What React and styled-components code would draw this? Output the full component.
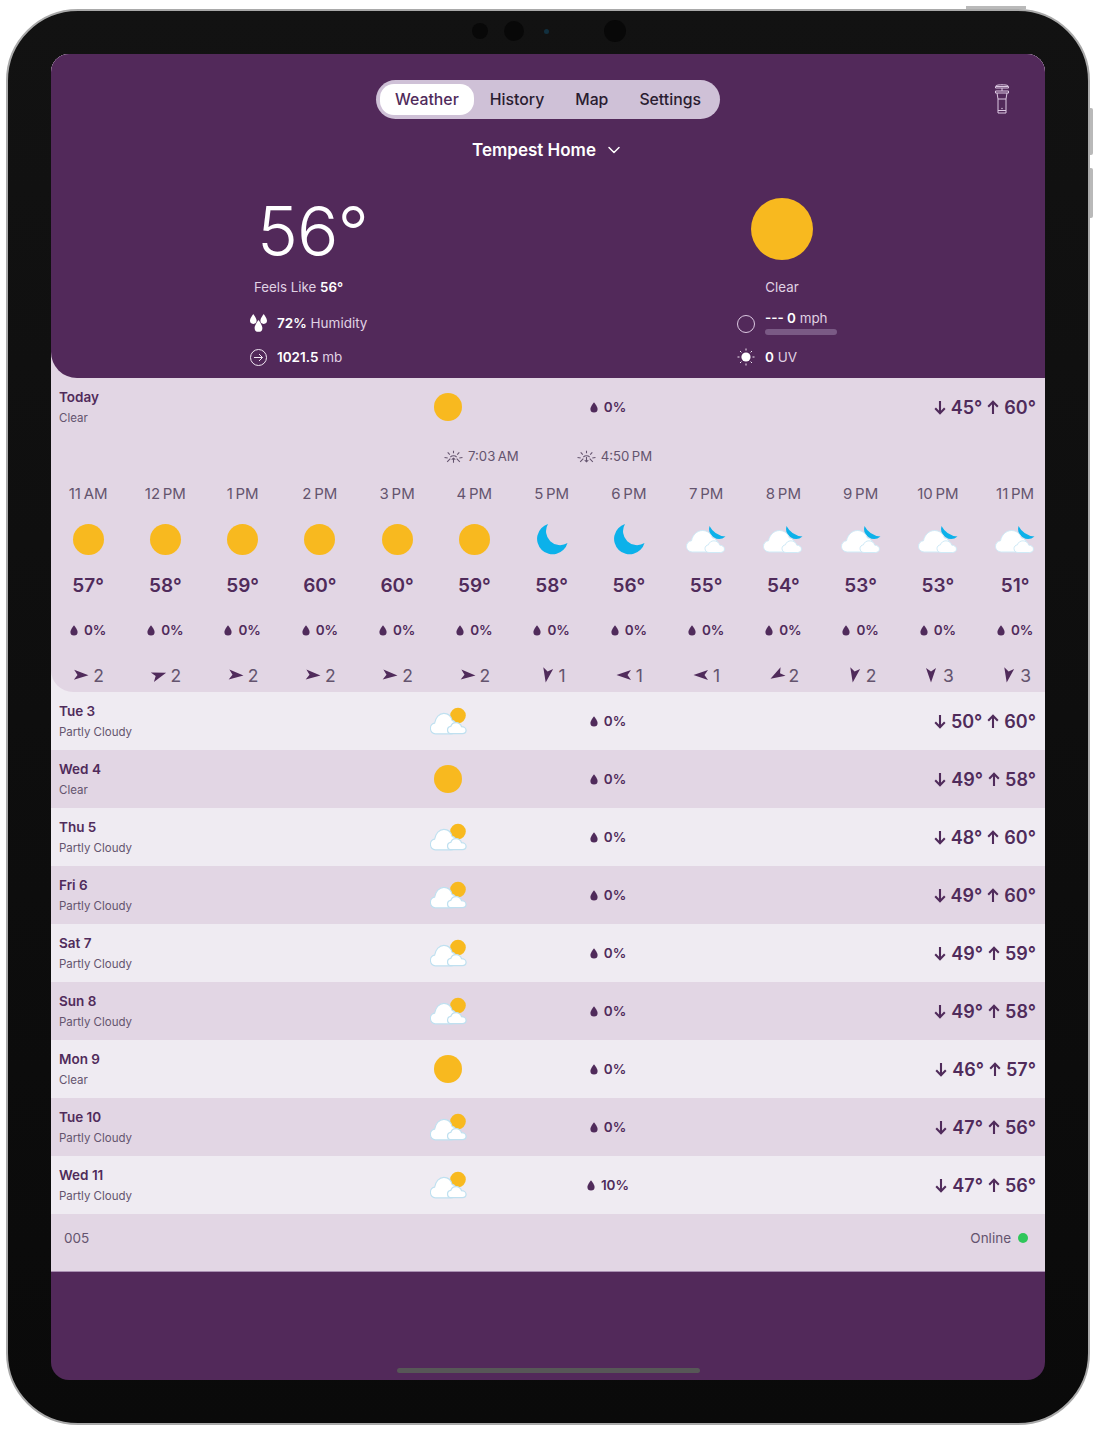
import React from 'react';
import styled, { createGlobalStyle } from 'styled-components';
import { ChevronDown } from 'lucide-react';

const PURPLE = '#52295a';
const LAVENDER = '#e2d6e4';
const PALE = '#efebf2';
const INK = '#502b5b';
const MUTED = '#64546e';

const GlobalStyle = createGlobalStyle`
  html, body {
    margin: 0;
    background: #ffffff;
    font-family: 'Inter', 'Liberation Sans', sans-serif;
  }
`;

const Page = styled.div`
  width: 1097px;
  height: 1429px;
  padding: 9px 0 0 6px;
  box-sizing: border-box;
  overflow: hidden;
`;

const Device = styled.div`
  position: relative;
  width: 1084px;
  height: 1416px;
  box-sizing: border-box;
  padding: 43px;
  background: linear-gradient(#121212, #0a0a0a);
  border: 2px solid #a9a9a9;
  border-radius: 72px;
`;

const SideButton = styled.div`
  position: absolute;
  right: -5px;
  top: ${p => p.$top}px;
  width: 3px;
  height: ${p => p.$height}px;
  background: #b9b9b9;
  border-radius: 0 2px 2px 0;
`;

const TopButton = styled.div`
  position: absolute;
  top: -5px;
  right: 62px;
  width: 60px;
  height: 3px;
  background: #b9b9b9;
`;

const Sensors = styled.div`
  position: absolute;
  top: 9px;
  left: 464px;
  height: 22px;
  display: flex;
  align-items: center;
`;

const Lens = styled.span`
  width: ${p => p.$size}px;
  height: ${p => p.$size}px;
  margin-left: ${p => p.$gap}px;
  border-radius: 50%;
  background: ${p => p.$color || '#080808'};
`;

const Screen = styled.div`
  width: 994px;
  height: 1326px;
  display: flex;
  flex-direction: column;
  background: ${PURPLE};
  border-radius: 18px;
  overflow: hidden;
`;

const Board = styled.div`
  background: ${PALE};
  border-bottom: 1px solid #a98fb2;
`;

const TopBlock = styled.div`
  background: ${LAVENDER};
  border-bottom-left-radius: 22px;
  overflow: hidden;
`;

const Header = styled.header`
  position: relative;
  height: 324px;
  box-sizing: border-box;
  padding-top: 26px;
  display: flex;
  flex-direction: column;
  background: ${PURPLE};
  border-bottom-left-radius: 26px;
`;

const Tabs = styled.nav`
  align-self: center;
  display: flex;
  height: 39px;
  box-sizing: border-box;
  padding: 4px;
  background: #cfc1d7;
  border-radius: 20px;
`;

const Tab = styled.div`
  padding: 0 15.5px 1px;
  display: flex;
  align-items: center;
  font-size: 15.8px;
  font-weight: 500;
  color: ${p => (p.$active ? INK : '#2a1c30')};
  background: ${p => (p.$active ? '#ffffff' : 'transparent')};
  border-radius: 14px;
`;

const Station = styled.svg`
  position: absolute;
  top: 30px;
  right: 35px;
`;

const Location = styled.div`
  align-self: center;
  margin-top: 19px;
  height: 24px;
  display: flex;
  align-items: center;
  gap: 8px;
  color: #ffffff;
  font-size: 17px;
  font-weight: 600;
`;

const Hero = styled.div`
  margin-top: 36px;
  padding-left: 199px;
  display: flex;
`;

const LeftColumn = styled.div`
  width: 487px;
  display: flex;
  flex-direction: column;
  align-items: flex-start;
`;

const RightColumn = styled.div`
  width: 90px;
  display: flex;
  flex-direction: column;
`;

const Temperature = styled.div`
  height: 66px;
  margin-left: 7px;
  font-size: 69px;
  line-height: 66px;
  font-weight: 300;
  letter-spacing: -1px;
  color: #ffffff;
`;

const Caption = styled.div`
  margin-top: ${p => p.$top || 13}px;
  margin-left: ${p => p.$left || 0}px;
  height: 20px;
  line-height: 20px;
  font-size: 13.3px;
  color: #e0d2e4;
  white-space: nowrap;
  text-align: ${p => p.$align || 'left'};

  b {
    font-weight: 600;
    color: #ffffff;
  }
`;

const StatRow = styled.div`
  margin-top: ${p => p.$top}px;
  height: 20px;
  display: flex;
  align-items: center;
  gap: 10px;
  font-size: 13.5px;
  color: #e0d2e4;
  white-space: nowrap;

  svg {
    flex-shrink: 0;
  }

  b {
    font-weight: 600;
    color: #ffffff;
  }
`;

const BigSun = styled.div`
  width: 62px;
  height: 62px;
  margin-left: 14px;
  border-radius: 50%;
  background: #f8b91f;
`;

const WindBlock = styled.div`
  margin-top: 12px;
  display: flex;
  gap: 10px;
`;

const WindDial = styled.div`
  flex-shrink: 0;
  width: 18px;
  height: 18px;
  margin-top: 6px;
  box-sizing: border-box;
  border: 1px solid #dcc9e2;
  border-radius: 50%;
`;

const WindText = styled.div`
  height: 18px;
  line-height: 18px;
  font-size: 13.4px;
  color: #e0d2e4;
  white-space: nowrap;

  b {
    font-weight: 600;
    color: #ffffff;
  }
`;

const WindBar = styled.div`
  width: 72px;
  height: 6px;
  margin-top: 2px;
  background: #7a5a85;
  border-radius: 3px;
`;

const DayRow = styled.div`
  height: 58px;
  box-sizing: border-box;
  padding: 0 9px 0 8px;
  display: grid;
  grid-template-columns: 355px 68px 252px 1fr;
  align-items: center;
  background: ${p => (p.$pale ? PALE : LAVENDER)};
`;

const DayName = styled.div`
  height: 18px;
  line-height: 18px;
  font-size: 13.5px;
  font-weight: 600;
  color: ${INK};
`;

const DaySummary = styled.div`
  margin-top: 4px;
  height: 16px;
  line-height: 16px;
  font-size: 11.5px;
  color: ${MUTED};
`;

const IconCell = styled.div`
  display: flex;
  justify-content: center;
`;

const Disc = styled.div`
  width: ${p => p.$size}px;
  height: ${p => p.$size}px;
  border-radius: 50%;
  background: #f8b91f;
`;

const Precip = styled.div`
  display: flex;
  justify-content: center;
  align-items: center;
  gap: 6px;
  font-size: 13.5px;
  font-weight: 600;
  color: ${INK};
`;

const HighLow = styled.div`
  display: flex;
  justify-content: flex-end;
  align-items: center;
  gap: 5px;
  font-size: 18px;
  font-weight: 600;
  color: ${INK};
`;

const SunTimes = styled.div`
  height: 40px;
  padding-left: 393px;
  display: flex;
  align-items: center;
  gap: 58px;
`;

const SunTime = styled.div`
  display: flex;
  align-items: center;
  gap: 5px;
  font-size: 13.2px;
  color: ${MUTED};
`;

const HourStrip = styled.div`
  display: flex;
  margin-left: -1.5px;
  padding-top: 8px;
  padding-bottom: 6px;
`;

const Hour = styled.div`
  flex: 0 0 77.25px;
  display: flex;
  flex-direction: column;
  align-items: center;
`;

const HourLabel = styled.div`
  height: 20px;
  line-height: 20px;
  font-size: 15px;
  color: ${MUTED};
  white-space: nowrap;
`;

const HourIcon = styled.div`
  margin-top: 15px;
  height: 40px;
  display: flex;
  align-items: center;
  justify-content: center;
`;

const HourTemp = styled.div`
  margin-top: 15px;
  height: 24px;
  line-height: 24px;
  font-size: 19px;
  font-weight: 600;
  color: ${INK};
`;

const HourPrecip = styled(Precip)`
  margin-top: 22px;
  height: 20px;
`;

const HourWind = styled.div`
  margin-top: 24px;
  height: 22px;
  display: flex;
  align-items: center;
  gap: 3px;
  font-size: 17.5px;
  color: ${MUTED};
`;

const StatusRow = styled.div`
  height: 57px;
  box-sizing: border-box;
  padding: 0 17px 10px 13px;
  display: flex;
  align-items: center;
  justify-content: space-between;
  background: ${LAVENDER};
  font-size: 13.5px;
  color: ${MUTED};
`;

const Online = styled.div`
  display: flex;
  align-items: center;
  gap: 7px;
`;

const OnlineDot = styled.span`
  width: 10px;
  height: 10px;
  border-radius: 50%;
  background: #2fc65a;
`;

const Foot = styled.div`
  flex: 1;
  display: flex;
  align-items: flex-end;
  justify-content: center;
  padding-bottom: 7px;
`;

const HomeBar = styled.div`
  width: 303px;
  height: 5px;
  background: #575757;
  border-radius: 3px;
`;

const CLOUD_BIG = 'M6.5 27C2.9 27 .5 24.4 .5 21.3c0-3 2.2-5.3 5-5.6C6.6 10 11 5.500 16.500 5.500c4.700 0 8.600 3 9.800 7.300 3.400.4 5.700 3.600 5.700 7 0 3.800-3 7.200-7 7.200z';
const CLOUD_SMALL = 'M23 27.500c-2.300 0-4-1.700-4-3.900 0-2 1.500-3.600 3.400-3.800.7-2.400 3-4 5.500-4 2.800 0 5.100 1.800 5.800 4.300 2.500.1 4.800 1.700 4.800 3.900 0 2.200-1.800 3.500-4 3.500z';

const Drop = () => (
  <svg width="8" height="11" viewBox="0 0 8 11">
    <path d="M4 .3S.4 4.600.4 7a3.600 3.600 0 0 0 7.200 0C7.600 4.600 4 .3 4 .3z" fill={INK} />
  </svg>
);

const TempArrow = ({ up }) => (
  <svg width="12" height="15" viewBox="0 0 12 15" fill="none" stroke={INK} strokeWidth="2.100">
    <path d={up ? 'M6 14V2M1.200 6.700 6 1.800l4.800 4.900' : 'M6 1v12M1.200 8.300 6 13.200l4.800-4.900'} />
  </svg>
);

const PartlyCloudy = () => (
  <svg width="37" height="30" viewBox="0 0 37 30">
    <circle cx="28" cy="9.500" r="7.800" fill="#f8b91f" />
    <g transform="translate(0 2) scale(.84 .96)">
      <path d={CLOUD_BIG} fill="#fff" stroke="#bfe0f0" strokeWidth="1.300" />
    </g>
    <g transform="translate(-.5 1.500) scale(.95 .95)">
      <path d={CLOUD_SMALL} fill="#fff" stroke="#bfe0f0" strokeWidth="1.300" />
    </g>
  </svg>
);

const NightCloudy = () => (
  <svg width="40" height="29" viewBox="0 0 40 29">
    <path d="M23.500 1A10 10 0 0 0 39.500 11.500 20 20 0 0 1 23.500 1z" fill="#0cb1ea" />
    <path d={CLOUD_BIG} fill="#fff" stroke="#cfeaf7" strokeWidth="1" />
    <path d={CLOUD_SMALL} fill="#fff" stroke="#cfeaf7" strokeWidth="1" />
  </svg>
);

const Moon = () => (
  <svg width="32" height="32" viewBox="0 0 32 32">
    <path d="M12 1A15.500 15.500 0 1 0 31.500 20 14 14 0 0 1 12 1z" fill="#0cb1ea" />
  </svg>
);

const WindArrow = ({ deg }) => (
  <svg width="18" height="18" viewBox="-9 -9 18 18">
    <path d="M7.500 0-7-5-3.500 0-7 5z" fill={INK} transform={`rotate(${deg})`} />
  </svg>
);

const SunEdge = ({ up }) => (
  <svg width="19" height="13" viewBox="0 0 18 12" fill="none" stroke={MUTED} strokeWidth="1">
    <path d="M9 .5v2.500M3.500 2l2 2.200M14.500 2l-2 2.200M.5 7l3 .5M17.500 7l-3 .5M3 11l3-3M15 11l-3-3M6 6.500c1.500-1.600 4.500-1.600 6 0" />
    <path d={up ? 'M9 12V7.500M7.300 9 9 7.500 10.700 9' : 'M9 6.500V11M7.300 9.500 9 11l1.700-1.500'} />
  </svg>
);

const StationIcon = () => (
  <Station width="16" height="30" viewBox="0 0 16 30" fill="none" stroke="#dcc9e2" strokeWidth="1">
    <path d="M2 2.500h12M1.500 2.500c0-1 2-1.700 6.500-1.700s6.500.7 6.500 1.700v1.500h-13zM1.500 7h13v2h-13zM8 4v3" />
    <path d="M3 9l1 6v14h8V15l1-6M4 15h8M4 26.500h8" />
    <circle cx="8" cy="24.500" r=".7" fill="#dcc9e2" stroke="none" />
  </Station>
);

const Humidity = () => (
  <svg width="17" height="18" viewBox="0 0 17 18" fill="#fff">
    <path d="M3.300 0S0 4.300 0 6.600a3.300 3.300 0 0 0 6.600 0C6.600 4.300 3.300 0 3.300 0zM13.700 0s-3.300 4.300-3.300 6.600a3.300 3.300 0 0 0 6.600 0c0-2.300-3.300-6.600-3.300-6.600zM8.500 6s-3.900 5-3.900 7.900a3.900 3.900 0 0 0 7.800 0c0-2.900-3.900-7.900-3.900-7.900z" />
  </svg>
);

const Pressure = () => (
  <svg width="17" height="17" viewBox="0 0 17 17" fill="none" stroke="#f1e8f3" strokeWidth="1">
    <circle cx="8.500" cy="8.500" r="8" />
    <path d="M4 8.500h8.500M9 5l3.500 3.500L9 12" />
  </svg>
);

const UvSun = () => (
  <svg width="18" height="18" viewBox="0 0 18 18" stroke="#f1e8f3" strokeWidth="1">
    <circle cx="9" cy="9" r="4.600" fill="#fff" stroke="none" />
    <path d="M9 .5v2M9 15.500v2M.5 9h2M15.500 9h2M3 3l1.400 1.400M15 3l-1.400 1.400M3 15l1.400-1.400M15 15l-1.400-1.400" />
  </svg>
);

const sky = {
  sun: <Disc $size={31} />,
  moon: <Moon />,
  cloud: <NightCloudy />,
};

const hours = [
  ['11\u2009AM', 'sun', 57, 2, 2],
  ['12\u2009PM', 'sun', 58, 2, -18],
  ['1\u2009PM', 'sun', 59, 2, 4],
  ['2\u2009PM', 'sun', 60, 2, 4],
  ['3\u2009PM', 'sun', 60, 2, 4],
  ['4\u2009PM', 'sun', 59, 2, 4],
  ['5\u2009PM', 'moon', 58, 1, 100],
  ['6\u2009PM', 'moon', 56, 1, 180],
  ['7\u2009PM', 'cloud', 55, 1, 180],
  ['8\u2009PM', 'cloud', 54, 2, 150],
  ['9\u2009PM', 'cloud', 53, 2, 100],
  ['10\u2009PM', 'cloud', 53, 3, 90],
  ['11\u2009PM', 'cloud', 51, 3, 100],
];

const days = [
  ['Tue 3', 'Partly Cloudy', '0%', 50, 60],
  ['Wed 4', 'Clear', '0%', 49, 58],
  ['Thu 5', 'Partly Cloudy', '0%', 48, 60],
  ['Fri 6', 'Partly Cloudy', '0%', 49, 60],
  ['Sat 7', 'Partly Cloudy', '0%', 49, 59],
  ['Sun 8', 'Partly Cloudy', '0%', 49, 58],
  ['Mon 9', 'Clear', '0%', 46, 57],
  ['Tue 10', 'Partly Cloudy', '0%', 47, 56],
  ['Wed 11', 'Partly Cloudy', '10%', 47, 56],
];

const Day = ({ name, summary, precip, low, high, pale }) => (
  <DayRow $pale={pale}>
    <div>
      <DayName>{name}</DayName>
      <DaySummary>{summary}</DaySummary>
    </div>
    <IconCell>{summary === 'Clear' ? <Disc $size={28} /> : <PartlyCloudy />}</IconCell>
    <Precip>
      <Drop />
      {precip}
    </Precip>
    <HighLow>
      <TempArrow />
      {low}°
      <TempArrow up />
      {high}°
    </HighLow>
  </DayRow>
);

export default function App() {
  return (
    <Page>
      <GlobalStyle />
      <Device>
        <TopButton />
        <SideButton $top={97} $height={47} />
        <SideButton $top={157} $height={50} />
        <Sensors>
          <Lens $size={16} $gap={0} />
          <Lens $size={20} $gap={16} />
          <Lens $size={5} $gap={20} $color="#12303f" />
          <Lens $size={22} $gap={55} />
        </Sensors>
        <Screen>
          <Board>
            <TopBlock>
              <Header>
                <Tabs>
                  <Tab $active>Weather</Tab>
                  <Tab>History</Tab>
                  <Tab>Map</Tab>
                  <Tab>Settings</Tab>
                </Tabs>
                <StationIcon />
                <Location>
                  Tempest Home
                  <ChevronDown size={20} strokeWidth={1.8} />
                </Location>
                <Hero>
                  <LeftColumn>
                    <Temperature>56°</Temperature>
                    <Caption $left={4}>
                      Feels Like <b>56°</b>
                    </Caption>
                    <StatRow $top={16}>
                      <Humidity />
                      <span>
                        <b>72%</b> Humidity
                      </span>
                    </StatRow>
                    <StatRow $top={14}>
                      <Pressure />
                      <span>
                        <b>1021.5</b> mb
                      </span>
                    </StatRow>
                  </LeftColumn>
                  <RightColumn>
                    <BigSun />
                    <Caption $top={17} $align="center">
                      Clear
                    </Caption>
                    <WindBlock>
                      <WindDial />
                      <div>
                        <WindText>
                          <b>--- 0</b> mph
                        </WindText>
                        <WindBar />
                      </div>
                    </WindBlock>
                    <StatRow $top={12}>
                      <UvSun />
                      <span>
                        <b>0</b> UV
                      </span>
                    </StatRow>
                  </RightColumn>
                </Hero>
              </Header>
              <DayRow>
                <div>
                  <DayName>Today</DayName>
                  <DaySummary>Clear</DaySummary>
                </div>
                <IconCell>
                  <Disc $size={28} />
                </IconCell>
                <Precip>
                  <Drop />
                  0%
                </Precip>
                <HighLow>
                  <TempArrow />
                  45°
                  <TempArrow up />
                  60°
                </HighLow>
              </DayRow>
              <SunTimes>
                <SunTime>
                  <SunEdge up />
                  7:03{'\u2009'}AM
                </SunTime>
                <SunTime>
                  <SunEdge />
                  4:50{'\u2009'}PM
                </SunTime>
              </SunTimes>
              <HourStrip>
                {hours.map(([label, icon, temp, wind, deg]) => (
                  <Hour key={label}>
                    <HourLabel>{label}</HourLabel>
                    <HourIcon>{sky[icon]}</HourIcon>
                    <HourTemp>{temp}°</HourTemp>
                    <HourPrecip>
                      <Drop />
                      0%
                    </HourPrecip>
                    <HourWind>
                      <WindArrow deg={deg} />
                      {wind}
                    </HourWind>
                  </Hour>
                ))}
              </HourStrip>
            </TopBlock>
            {days.map(([name, summary, precip, low, high], i) => (
              <Day
                key={name}
                name={name}
                summary={summary}
                precip={precip}
                low={low}
                high={high}
                pale={i % 2 === 0}
              />
            ))}
            <StatusRow>
              <span>005</span>
              <Online>
                Online
                <OnlineDot />
              </Online>
            </StatusRow>
          </Board>
          <Foot>
            <HomeBar />
          </Foot>
        </Screen>
      </Device>
    </Page>
  );
}
